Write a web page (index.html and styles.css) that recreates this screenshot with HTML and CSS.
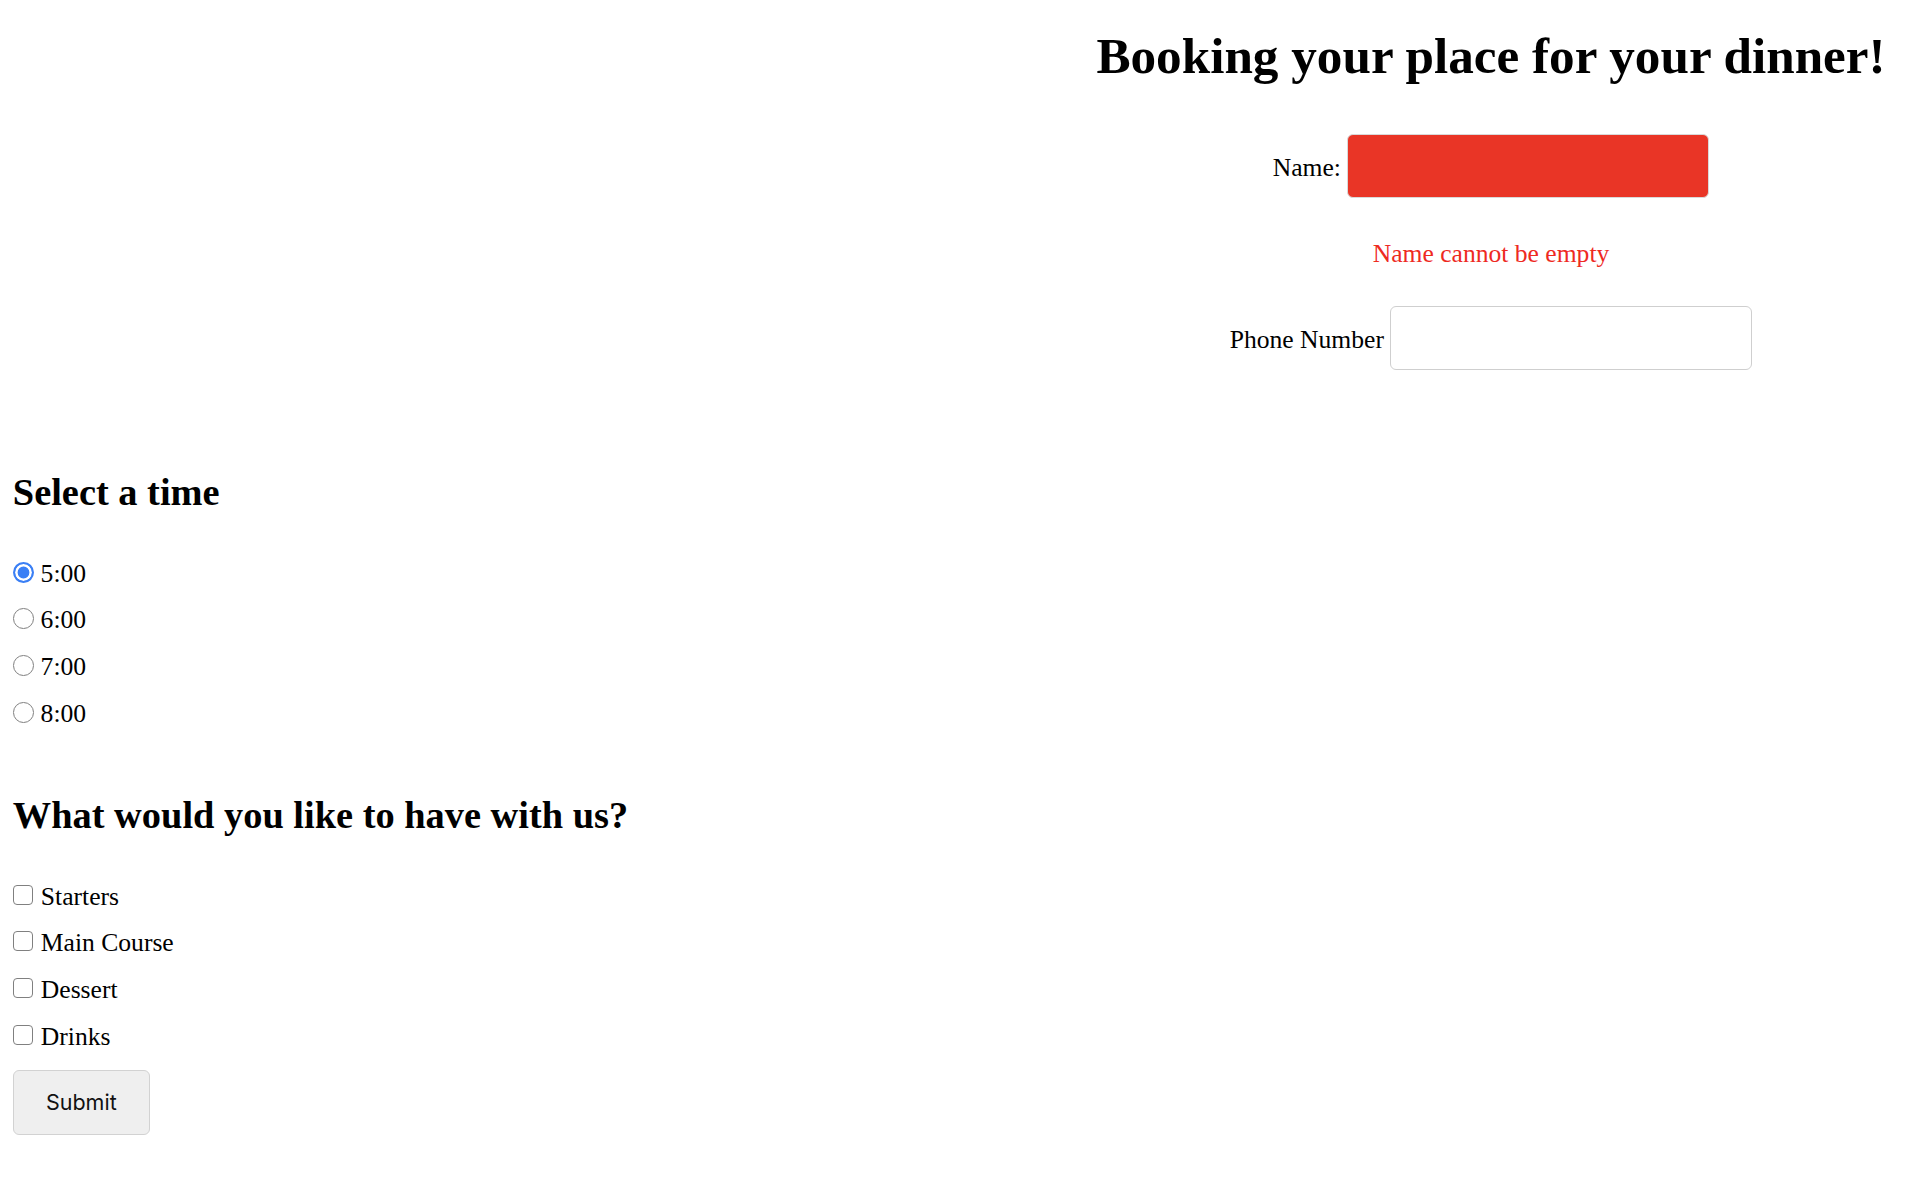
FILE: index.html
```html
<!DOCTYPE html>
<html lang="en">
<head>
<meta charset="utf-8">
<title>Booking</title>
<link rel="stylesheet" href="styles.css">
</head>
<body>
  <header class="top">
    <div class="booking">
      <h1 class="title">Booking your place for your dinner!</h1>
      <div class="field field-name">
        <label class="field-label" for="name">Name:</label>
        <input class="text-input text-input-error" id="name" type="text">
      </div>
      <p class="error">Name cannot be empty</p>
      <div class="field field-phone">
        <label class="field-label" for="phone">Phone Number</label>
        <input class="text-input" id="phone" type="text">
      </div>
    </div>
  </header>
  <main class="options">
    <h2 class="section-title section-time">Select a time</h2>
    <div class="choices">
      <label class="choice"><input class="radio" type="radio" name="time" checked><span>5:00</span></label>
      <label class="choice"><input class="radio" type="radio" name="time"><span>6:00</span></label>
      <label class="choice"><input class="radio" type="radio" name="time"><span>7:00</span></label>
      <label class="choice"><input class="radio" type="radio" name="time"><span>8:00</span></label>
    </div>
    <h2 class="section-title section-food">What would you like to have with us?</h2>
    <div class="choices">
      <label class="choice"><input class="check" type="checkbox"><span>Starters</span></label>
      <label class="choice"><input class="check" type="checkbox"><span>Main Course</span></label>
      <label class="choice"><input class="check" type="checkbox"><span>Dessert</span></label>
      <label class="choice"><input class="check" type="checkbox"><span>Drinks</span></label>
    </div>
    <button class="submit" type="button">Submit</button>
  </main>
</body>
</html>
```
FILE: styles.css
```css
html, body {
  margin: 0;
  padding: 0;
  background: #ffffff;
}

body {
  font-family: "Liberation Serif", "Times New Roman", serif;
  font-size: 25.6px;
  line-height: 29.4px;
  color: #000000;
}

.top {
  display: flex;
  justify-content: flex-end;
  padding: 26px 8px 0 0;
}

.booking {
  width: 846px;
  display: flex;
  flex-direction: column;
  align-items: center;
}

.title {
  margin: 0;
  font-size: 51.2px;
  line-height: 59px;
  font-weight: bold;
  white-space: nowrap;
}

.field {
  display: flex;
  align-items: center;
  gap: 6.4px;
}

.field-name {
  margin-top: 49px;
}

.field-phone {
  margin-top: 38px;
}

.field-label {
  padding-top: 4px;
}

.text-input {
  box-sizing: border-box;
  width: 362px;
  height: 64px;
  margin: 0;
  padding: 0 8px;
  border: 1.6px solid #cfcfcf;
  border-radius: 6px;
  background: #ffffff;
  font: inherit;
  outline: none;
}

.text-input-error {
  background: #e93526;
  border-color: #d9d9d9;
}

.error {
  margin: 40.7px 0 0;
  color: #ee2a1f;
}

.options {
  padding: 0 0 0 12.8px;
}

.section-title {
  margin: 0;
  font-size: 38.4px;
  line-height: 44px;
  font-weight: bold;
}

.section-time {
  margin-top: 100px;
}

.section-food {
  margin-top: 65px;
}

.choices {
  display: flex;
  flex-direction: column;
  gap: 17.3px;
  margin-top: 44.5px;
}

.choice {
  display: flex;
  align-items: flex-start;
  height: 29.4px;
}

.radio,
.check {
  -webkit-appearance: none;
  appearance: none;
  box-sizing: border-box;
  margin: 3.2px 7px 0 0;
  width: 20.8px;
  height: 20.8px;
  border: 1.6px solid #808080;
  background: #ffffff;
  flex: none;
}

.radio {
  border-radius: 50%;
}

.radio:checked {
  border: 2px solid #3a7ff5;
  background: #3a7ff5;
  box-shadow: inset 0 0 0 2.6px #ffffff;
}

.check {
  width: 20px;
  height: 20px;
  margin-left: 0.5px;
  margin-right: 7.5px;
  border-radius: 4px;
}

.submit {
  margin-top: 18.5px;
  box-sizing: border-box;
  width: 137px;
  height: 65px;
  border: 1.6px solid #d2d2d2;
  border-radius: 6px;
  background: #efefef;
  font-family: "Inter", "Noto Sans", sans-serif;
  font-size: 21.5px;
  color: #111111;
  padding: 0;
}
```
